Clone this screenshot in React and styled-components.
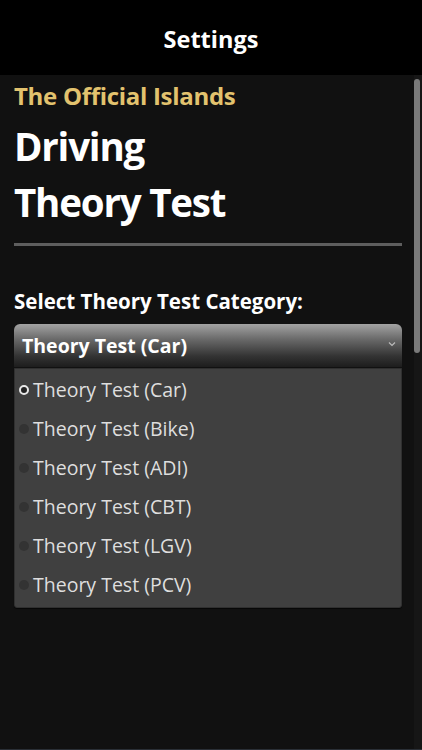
import React from "react";
import styled, { createGlobalStyle } from "styled-components";

const Global = createGlobalStyle`
  html, body { margin: 0; padding: 0; background: #111; }
  body { font-family: "Open Sans", "Noto Sans", sans-serif; }
`;

const Screen = styled.div`
  width: 422px;
  height: 750px;
  display: flex;
  flex-direction: column;
  background: #111;
  overflow: hidden;
`;

const Header = styled.header`
  height: 75px;
  flex: none;
  background: #000;
  display: flex;
  align-items: center;
  justify-content: center;
  color: #fff;
  font-size: 23.5px;
  font-weight: 700;
  letter-spacing: 0;
  padding-top: 2px;
  box-sizing: border-box;
`;

const Body = styled.div`
  flex: 1;
  display: flex;
  border-bottom: 1px solid #2a2f36;
`;

const Content = styled.main`
  flex: 1;
  padding: 0 12px 0 14px;
  display: flex;
  flex-direction: column;
`;

const Track = styled.div`
  width: 8px;
  flex: none;
  background: #161616;
  padding: 4px 0 0 0;
  display: flex;
  justify-content: flex-start;
`;

const Thumb = styled.div`
  width: 6px;
  height: 274px;
  border-radius: 3px;
  background: #7a7a7a;
`;

const Brand = styled.div`
  color: #e2c26e;
  font-size: 24px;
  font-weight: 700;
  letter-spacing: -0.3px;
  margin-top: 6px;
  line-height: 30px;
`;

const Title = styled.h1`
  margin: 7px 0 0 0;
  color: #fff;
  font-size: 38.5px;
  font-weight: 700;
  letter-spacing: -1.2px;
  line-height: 56px;
`;

const Divider = styled.hr`
  border: none;
  height: 3px;
  background: #5e5e5e;
  margin: 13px 0 0 0;
`;

const Label = styled.div`
  color: #fff;
  font-size: 20.5px;
  font-weight: 700;
  letter-spacing: 0;
  margin-top: 41px;
  line-height: 28px;
`;

const Select = styled.div`
  margin-top: 9px;
  height: 43px;
  border-radius: 6px 6px 0 0;
  background: linear-gradient(to bottom, #a3a3a3 0%, #6a6a6a 35%, #333 75%, #1d1d1d 100%);
  display: flex;
  align-items: center;
  justify-content: space-between;
  padding: 0 6px 0 8px;
  color: #fff;
  font-size: 19.5px;
  font-weight: 700;
  letter-spacing: 0;
`;

const Chevron = styled.svg`
  width: 8px;
  height: 6px;
  margin-top: -4px;
`;

const List = styled.ul`
  list-style: none;
  margin: 1px 0 0 0;
  padding: 1px 0 3px 0;
  background: #404040;
  border: 1px solid #303030;
  border-radius: 0 0 3px 3px;
  box-shadow: 0 1px 1px rgba(0,0,0,0.6);
`;

const Item = styled.li`
  height: 39px;
  display: flex;
  align-items: center;
  padding-left: 4px;
  color: #dedede;
  font-size: 19.5px;
  font-weight: 500;
  letter-spacing: 0;
`;

const Dot = styled.span`
  width: 10px;
  height: 10px;
  border-radius: 50%;
  box-sizing: border-box;
  margin-right: 4px;
  flex: none;
  background: ${(p) => (p.$on ? "#222" : "#333")};
  border: ${(p) => (p.$on ? "2px solid #e8e8e8" : "none")};
`;

const options = ["Car", "Bike", "ADI", "CBT", "LGV", "PCV"];

export default function App() {
  return (
    <Screen>
      <Global />
      <Header>Settings</Header>
      <Body>
        <Content>
          <Brand>The Official Islands</Brand>
          <Title>
            Driving
            <br />
            Theory Test
          </Title>
          <Divider />
          <Label>Select Theory Test Category:</Label>
          <Select>
            <span>Theory Test (Car)</span>
            <Chevron viewBox="0 0 8 6">
              <path d="M1 1.5 L4 4.5 L7 1.5" fill="none" stroke="#bbb" strokeWidth="1.2" />
            </Chevron>
          </Select>
          <List>
            {options.map((o, i) => (
              <Item key={o}>
                <Dot $on={i === 0} />
                Theory Test ({o})
              </Item>
            ))}
          </List>
        </Content>
        <Track>
          <Thumb />
        </Track>
      </Body>
    </Screen>
  );
}
